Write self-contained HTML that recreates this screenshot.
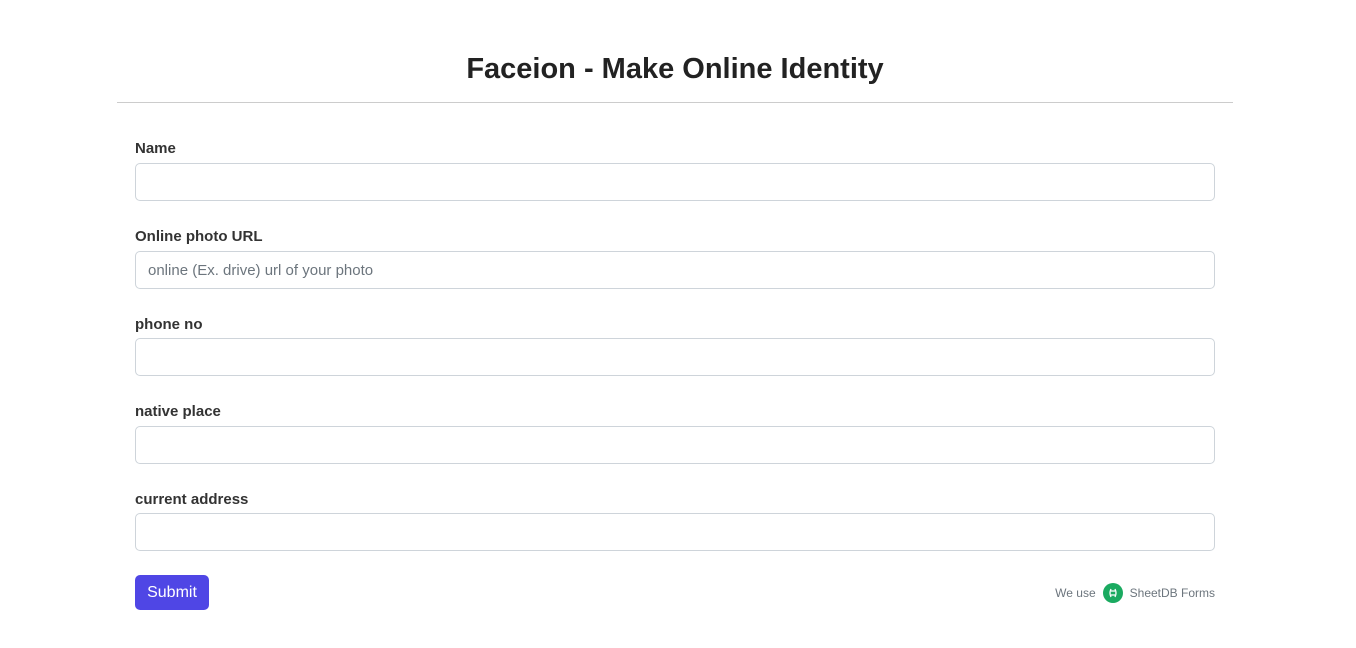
<!DOCTYPE html>
<html><head><style>
body{margin:0;background:#fff;font-family:"Liberation Sans",sans-serif;color:#212529}
h1{position:absolute;top:48px;left:0;width:1350px;text-align:center;margin:0;font-size:29px;font-weight:bold;line-height:42px;color:#222}
.hr{position:absolute;top:102px;left:117px;width:1116px;height:1px;background:#ccc}
label{position:absolute;left:135px;font-size:15px;font-weight:bold;color:#333}
.in{position:absolute;left:135px;width:1078px;height:36px;border:1px solid #ced4da;border-radius:5px}
.in span{position:absolute;left:12px;top:10px;font-size:15px;color:#6c757d}
.btn{position:absolute;left:135px;top:575px;width:74px;height:35px;background:#4f46e5;border-radius:5px;color:#fff;font-size:16px;text-align:center;line-height:36px}
.foot{position:absolute;right:141px;top:583px;font-size:12px;color:#6c757d;display:flex;align-items:center}
.logo{width:20px;height:20px;border-radius:50%;background:#1aaa60;margin:0 7px;display:inline-block;position:relative}
</style></head><body>
<h1>Faceion - Make Online Identity</h1>
<div class="hr"></div>
<label style="top:140px">Name</label><div class="in" style="top:163px"></div>
<label style="top:228px">Online photo URL</label><div class="in" style="top:251px"><span>online (Ex. drive) url of your photo</span></div>
<label style="top:316px">phone no</label><div class="in" style="top:338px"></div>
<label style="top:403px">native place</label><div class="in" style="top:426px"></div>
<label style="top:491px">current address</label><div class="in" style="top:513px"></div>
<div class="btn">Submit</div>
<div class="foot">We use <span class="logo"><svg width="20" height="20" viewBox="0 0 20 20"><path d="M8 6q-2 4 0 8M12 6q2 4 0 8M8 8h4M8 12h4" stroke="#fff" stroke-width="1.3" fill="none"/></svg></span> SheetDB Forms</div>
</body></html>
